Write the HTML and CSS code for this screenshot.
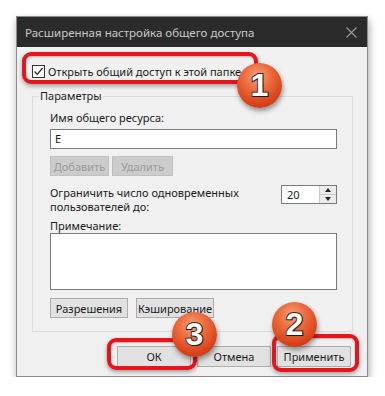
FILE: index.html
```html
<!DOCTYPE html>
<html lang="ru">
<head>
    <meta charset="UTF-8">
    <meta name="viewport" content="width=device-width, initial-scale=1.0">
    <title>Расширенная настройка общего доступа</title>
    <link rel="stylesheet" href="styles.css">
</head>
<body>
    <div class="dialog">
        <div class="titlebar">
            <span class="title">Расширенная настройка общего доступа</span>
            <svg class="close" width="11" height="11" viewBox="0 0 11 11">
                <path d="M0.5 0.5 L10.5 10.5 M10.5 0.5 L0.5 10.5" stroke="#9a9a9a" stroke-width="1.1" fill="none"/>
            </svg>
        </div>
        <div class="body">
            <label class="check-row">
                <span class="checkbox">
                    <svg width="11" height="11" viewBox="0 0 11 11">
                        <path d="M1.5 5.5 L4.2 8.3 L9.6 2" stroke="#222" stroke-width="1.2" fill="none"/>
                    </svg>
                </span>
                Открыть общий доступ к этой папке
            </label>

            <fieldset class="group">
                <legend>Параметры</legend>
                <div class="label">Имя общего ресурса:</div>
                <div class="textbox">E</div>
                <div class="btn-row">
                    <button class="btn disabled add">Добавить</button>
                    <button class="btn disabled remove">Удалить</button>
                </div>
                <div class="limit-row">
                    <div class="limit-text">Ограничить число одновременных<br>пользователей до:</div>
                    <div class="spinner">
                        <span class="spin-value">20</span>
                        <span class="spin-btns">
                            <span class="spin-btn"><i class="tri up"></i></span>
                            <span class="spin-btn"><i class="tri down"></i></span>
                        </span>
                    </div>
                </div>
                <div class="label note-label">Примечание:</div>
                <div class="textarea"></div>
                <div class="btn-row bottom-row">
                    <button class="btn perm">Разрешения</button>
                    <button class="btn cache">Кэширование</button>
                </div>
            </fieldset>

            <div class="actions">
                <button class="btn action">ОК</button>
                <button class="btn action">Отмена</button>
                <button class="btn action">Применить</button>
            </div>
        </div>
    </div>

    <div class="mark mark-share"></div>
    <div class="mark mark-ok"></div>
    <div class="mark mark-apply"></div>

    <div class="badge badge-1"><span>1</span></div>
    <div class="badge badge-2"><span>2</span></div>
    <div class="badge badge-3"><span>3</span></div>
</body>
</html>
```

FILE: styles.css
```css
body {
    margin: 0;
    background-color: #fff;
    font-family: "Noto Sans", "Open Sans", sans-serif;
    font-size: 11px;
    color: #1a1a1a;
}
.dialog {
    width: 350px;
    height: 359px;
    margin: 16px 0 0 16px;
    border: 1px solid #8c8c8c;
    background-color: #f0f0f0;
    box-shadow: 1px 4px 8px rgba(0, 0, 0, 0.35);
}
.titlebar {
    height: 30px;
    background-color: #2b2b2b;
    display: flex;
    align-items: center;
    justify-content: space-between;
    padding: 0 10px 0 8px;
}
.title {
    color: #c9c9c9;
    font-size: 11.5px;
}
.body {
    padding: 16px 14px 0 15px;
}
.check-row {
    display: flex;
    align-items: center;
    height: 16px;
    gap: 3px;
}
.checkbox {
    width: 11px;
    height: 11px;
    border: 1px solid #333;
    background-color: #fff;
    display: flex;
}
.group {
    margin: 10px 0 0 0;
    padding: 8px 15px 13px 17px;
    border: 1px solid #dcdcdc;
}
.group legend {
    padding: 0 1px;
    margin-left: -11px;
    line-height: 14px;
}
.label {
    line-height: 14px;
    margin-bottom: 4px;
}
.textbox {
    height: 18px;
    border: 1px solid #7a7a7a;
    background-color: #fff;
    line-height: 18px;
    padding-left: 4px;
}
.btn {
    font-family: inherit;
    font-size: 11px;
    color: #1a1a1a;
    background-color: #e1e1e1;
    border: 1px solid #adadad;
    border-radius: 0;
    height: 20px;
    padding: 0;
}
.btn-row {
    display: flex;
    gap: 3px;
    margin-top: 7px;
}
.btn.disabled {
    background-color: #cccccc;
    border-color: #bfbfbf;
    color: #9a9a9a;
}
.add {
    width: 59px;
}
.remove {
    width: 61px;
}
.limit-row {
    display: flex;
    justify-content: space-between;
    margin-top: 9px;
}
.limit-text {
    line-height: 14px;
    padding-top: 1px;
}
.spinner {
    width: 54px;
    height: 17px;
    border: 1px solid #7a7a7a;
    background-color: #fff;
    display: flex;
    justify-content: space-between;
}
.spin-value {
    line-height: 17px;
    padding-left: 5px;
}
.spin-btns {
    width: 16px;
    display: flex;
    flex-direction: column;
    border-left: 1px solid #c9c9c9;
}
.spin-btn {
    flex: 1;
    background-color: #ececec;
    display: flex;
    align-items: center;
    justify-content: center;
}
.spin-btn + .spin-btn {
    border-top: 1px solid #c9c9c9;
}
.tri {
    width: 0;
    height: 0;
    border-left: 3px solid transparent;
    border-right: 3px solid transparent;
}
.tri.up {
    border-bottom: 4px solid #222;
}
.tri.down {
    border-top: 4px solid #222;
}
.note-label {
    margin-top: 5px;
    margin-bottom: 0;
}
.textarea {
    height: 55px;
    border: 1px solid #7a7a7a;
    background-color: #fff;
}
.bottom-row {
    margin-top: 8px;
    gap: 8px;
}
.perm {
    width: 78px;
}
.cache {
    width: 78px;
}
.actions {
    display: flex;
    justify-content: flex-end;
    gap: 6px;
    margin-top: 14px;
    padding-right: 2px;
}
.action {
    width: 74px;
    height: 21px;
}
.mark {
    position: absolute;
    border: 4px solid #e8141c;
    border-radius: 9px;
    box-shadow: 0 2px 4px rgba(0, 0, 0, 0.35), inset 0 1px 2px rgba(0, 0, 0, 0.25);
    box-sizing: border-box;
}
.mark-share {
    left: 22px;
    top: 52px;
    width: 236px;
    height: 32px;
}
.mark-ok {
    left: 107px;
    top: 338px;
    width: 90px;
    height: 32px;
}
.mark-apply {
    left: 272px;
    top: 334px;
    width: 87px;
    height: 38px;
}
.badge {
    position: absolute;
    width: 45px;
    height: 45px;
    border-radius: 50%;
    background: radial-gradient(circle at 45% 30%, #f7a27a 0%, #ec6a3c 35%, #d8421a 70%, #b02a0c 100%);
    box-shadow: 1px 3px 5px rgba(0, 0, 0, 0.4);
    display: flex;
    align-items: center;
    justify-content: center;
}
.badge span {
    font-family: "Liberation Sans", Arial, sans-serif;
    font-weight: bold;
    font-size: 32px;
    color: #fff;
    -webkit-text-stroke: 2px #2a2a2a;
    paint-order: stroke fill;
    text-shadow: 1px 1px 1px rgba(0, 0, 0, 0.4);
}
.badge-1 {
    left: 237px;
    top: 63px;
}
.badge-2 {
    left: 272px;
    top: 302px;
}
.badge-3 {
    left: 172px;
    top: 312px;
}
```
